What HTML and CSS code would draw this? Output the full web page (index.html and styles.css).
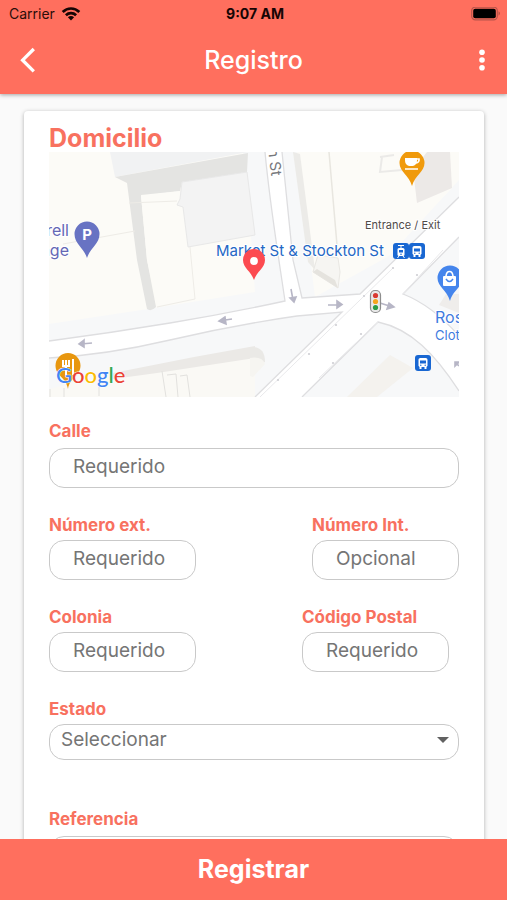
FILE: index.html
```html
<!DOCTYPE html>
<html lang="es">
<head>
<meta charset="utf-8">
<meta name="viewport" content="width=device-width, initial-scale=1">
<title>Registro</title>
<link rel="stylesheet" href="styles.css">
</head>
<body>
<header class="top">
  <div class="status">
    <div class="carrier">
      <span>Carrier</span>
      <svg width="20" height="15" viewBox="0 0 20 15" aria-hidden="true"><g fill="none" stroke="#160504" stroke-width="2.7"><path d="M1.7 5C6.4 0.3 13.6 0.3 18.3 5"/><path d="M4.9 8.3C7.8 5.5 12.2 5.5 15.1 8.3"/></g><path d="M6.9 10.2Q10 7.7 13.1 10.2L10 13.4Z" fill="#160504"/></svg>
    </div>
    <time class="clock">9:07 AM</time>
    <svg class="battery" width="30" height="14" viewBox="0 0 30 14" aria-hidden="true"><rect x="0.7" y="0.2" width="25.6" height="12.6" rx="3.6" fill="none" stroke="#b8554a" stroke-width="1.2"/><rect x="2.2" y="1.7" width="22.6" height="9.6" rx="2" fill="#000"/><path d="M27.7 4.3Q29.6 6.5 27.7 8.700Z" fill="#8f3d34"/></svg>
  </div>
  <div class="bar">
    <button class="icon-btn" type="button" aria-label="Volver"><svg width="16" height="26" viewBox="0 0 16 26" aria-hidden="true"><path d="M13.8 2L2.6 13.2L13.8 24.4" fill="none" stroke="#fff" stroke-width="3.3"/></svg></button>
    <h1 class="title">Registro</h1>
    <button class="icon-btn menu-btn" type="button" aria-label="Menú"><svg width="6" height="22" viewBox="0 0 6 22" aria-hidden="true"><g fill="#fff"><circle cx="3" cy="3.2" r="2.8"/><circle cx="3" cy="11" r="2.8"/><circle cx="3" cy="18.8" r="2.8"/></g></svg></button>
  </div>
</header>

<main class="content">
  <form class="card" id="registro">
    <h2 class="section">Domicilio</h2>
    <svg class="map" viewBox="0 0 410 245" role="img" aria-label="Mapa">
      <rect width="410" height="245" fill="#fcfbf7"/>
      <!-- sidewalks -->
      <path d="M0 172L99 157L206 140L202 85L194 0H248L266 145L340 104L410 28V245H0Z" fill="#f7f8f9"/>
      <path d="M249 2L279 0L288 93L291 125L267 134Z" fill="#fcfbf7"/>
      <path d="M279 0H401L403 36L340 99L290 125Z" fill="#fcfbf7"/>
      <!-- buildings -->
      <path d="M61 0H199L66 25Z" fill="#f1f2f3"/>
      <path d="M66 25L199 1L198 20L133 30L131 39L92 43L98 108L107 155Q102 160 98 157L88 108L78 31Z" fill="#e4e4e2"/>
      <path d="M92 44L132 39L138 95L143 141L108 153L98 108Z" fill="#fcfbf7"/>
      <path d="M133 30L198 20L206 83L139 95L134 55L128 53L131 47Z" fill="#f3f3f3" stroke="#e8e8e8"/>
      <path d="M14 92L86 79M80 51L128 49M141 95L146 147L108 155" fill="none" stroke="#eeece7"/>
      <path d="M244 0L251 2L266 118L259 110Z" fill="#ecebe8"/>
      <path d="M280 0L288 93" stroke="#e8e6e0" stroke-width="1.5"/>
      <path d="M333 5L331 20L353 18M331 5L345 3" fill="none" stroke="#ebeae8" stroke-width="2"/>
      <path d="M364 18L378 0H401L403 36L368 51Z" fill="#ece9e7"/>
      <path d="M264 120L269 103L289 106L291 120L289 136Z" fill="#f6f5f2" stroke="#e9e7e3"/>
      <path d="M264 120L289 136L286 128L268 117Z" fill="#e5e3de"/>
      <path d="M390 153L397 142H410V161Z" fill="#efedeb"/>
      <path d="M341 203L364 216L328 245H298Z" fill="#f4f2ee"/>
      <path d="M36 228L108 219L206 203L206 245H0V237Z" fill="#faf9f5"/>
      <path d="M64 221L145 205L206 194V206L108 221L64 227Z" fill="#ebe9e6"/>
      <path d="M201 195Q216 194 216 210L201 216Z" fill="#eae9e6"/><path d="M201 206Q213 204 216 212L204 225L201 224Z" fill="#f6f5f1"/>
      <path d="M113 219L117 245M118 223L127 222L129 245M131 224L138 223L141 245M15 236V245M50 235V244M1 237V245" fill="none" stroke="#e2e1de"/>
      <!-- roads -->
      <path d="M0 189Q61 181 121 171T236 149C229 101 221 54 216 0H233L244 108L253 146L311 142L410 45V85L354 142C377 151 396 168 410 184V239C386 202 362 177 329 170L253 245H206L293 160L248 164Q185 173 121 188T0 206Z" fill="#fff"/>
      <g fill="none" stroke="#dedee0" stroke-width="1.3">
        <path d="M0 189Q61 181 121 171T236 149C229 101 221 54 216 0"/>
        <path d="M233 0L244 108L253 146L311 142L410 45"/>
        <path d="M410 85L354 142C377 151 396 168 410 184"/>
        <path d="M410 239C386 202 362 177 329 170L253 245"/>
        <path d="M206 245L293 160L248 164Q185 173 121 188T0 206"/>
        <path d="M344 116L211 245M394 98L354 142M329 170L270 226" stroke="#e9e9eb" stroke-width="1"/>
      </g>
      <g fill="#cfcfd4"><circle cx="344" cy="116" r="1.1"/><circle cx="315" cy="144" r="1.1"/><circle cx="287" cy="173" r="1.1"/><circle cx="260" cy="202" r="1.1"/><circle cx="229" cy="228" r="1.1"/><circle cx="368" cy="123" r="1.1"/><circle cx="312" cy="182" r="1.1"/><circle cx="284" cy="211" r="1.1"/></g>
      <!-- traffic directions -->
      <g fill="#b7b6c6" stroke="#b7b6c6" stroke-width="1.6">
        <path d="M43 191L32 192M35 188L30 192L35 195Z"/>
        <path d="M183 167L173 168.500M176 165L170 169L177 172Z"/>
        <path d="M242 137L244 148M241 146L245 150L247 145Z"/>
        <path d="M279 153H290M288 149L293 152.500L288 156Z"/>
        <path d="M331 151L342 154.500M340 151L345 155L338 157Z"/>
        <path d="M410 214L406 210M406 214V210H410Z"/>
      </g>
      <rect x="321.500" y="138.500" width="10" height="22" rx="4.500" fill="#e9e9e9" stroke="#8d8d8d" stroke-width="1.200"/>
      <circle cx="326.500" cy="143.500" r="2.600" fill="#d93a32"/><circle cx="326.500" cy="149.500" r="2.600" fill="#f5a51d"/><circle cx="326.500" cy="155.500" r="2.600" fill="#2c9c46"/>
      <!-- places -->
      <path d="M38 106C35 96 25.500 92 25.500 82A12.500 12.500 0 0 1 50.500 82C50.500 92 41 96 38 106Z" fill="#6873c3"/>
      <text x="38" y="88" class="m-park">P</text>
      <path d="M363 34C360 23 350.500 20 350.500 11A12.500 12.500 0 0 1 375.500 11C375.500 20 366 23 363 34Z" fill="#f09a0c"/>
      <path d="M356 6H368V8C368 12 366 14 362 14C358 14 356 12 356 8Z" fill="#fff"/><path d="M368 7H370Q370.500 11 366 11M356 17H369" fill="none" stroke="#fff" stroke-width="1.700"/>
      <path d="M401 149C398 138 388.500 135 388.500 126A12.500 12.500 0 0 1 413.500 126C413.500 135 404 138 401 149Z" fill="#4585ec"/>
      <rect x="394" y="124" width="13" height="10" rx="1" fill="#fff"/><path d="M397 124Q397.500 119.500 400.500 119.500T404 124" fill="none" stroke="#fff" stroke-width="1.600"/><path d="M397 127Q400.500 132 404 127" fill="none" stroke="#4585ec" stroke-width="1.500"/>
      <path d="M19 237C17 225 6.500 224 6.500 213.500A12.500 12.500 0 0 1 31.500 213.500C31.500 224 21 225 19 237Z" fill="#e8970f"/>
      <path d="M14 208V215M17 208V215M20 208V215M14 214H20M17 214V223M24 207V223" fill="none" stroke="#fff" stroke-width="2"/>
      <g fill="#1967d2"><rect x="344" y="91" width="16" height="16" rx="3"/><rect x="360" y="91" width="16" height="16" rx="3"/><rect x="366" y="203" width="16" height="16" rx="3"/></g>
      <path d="M349 93.500H355M352 93.500V96" stroke="#fff"/><rect x="348.500" y="96" width="7" height="8" rx="1.500" fill="#fff"/><rect x="350" y="98" width="4" height="2.500" fill="#1967d2"/><path d="M350 104L348.500 106M354 104L355.500 106" stroke="#fff"/><circle cx="352" cy="102.300" r="0.800" fill="#1967d2"/>
      <g id="bus"><rect x="363.500" y="94" width="9" height="9" rx="1.800" fill="#fff"/><path d="M364.500 102H366.500V105H364.500ZM369.500 102H371.500V105H369.500Z" fill="#fff"/><rect x="365" y="96.500" width="6" height="3" fill="#1967d2"/><circle cx="365.800" cy="101.300" r="0.700" fill="#1967d2"/><circle cx="370.200" cy="101.300" r="0.700" fill="#1967d2"/></g>
      <use href="#bus" x="6" y="112"/>
      <g class="m-label">
        <text x="20" y="84" class="m-violet" text-anchor="end">rell</text>
        <text x="20" y="104" class="m-violet" text-anchor="end">age</text>
        <text x="167" y="104" class="m-station">Market St &amp; Stockton St</text>
        <text x="316" y="77" class="m-entry">Entrance / Exit</text>
        <text x="386" y="171" class="m-shop">Ros</text>
        <text x="386" y="188" class="m-kind">Clot</text>
        <text transform="translate(219 -3) rotate(83)" class="m-street">n St</text>
      </g>
      <path d="M205 128C202 119 194 116 194 108A11 11 0 0 1 216 108C216 116 208 119 205 128Z" fill="#fc4a50"/><circle cx="205" cy="109" r="3.900" fill="#fff"/>
      <text x="7" y="231" class="m-logo"><tspan fill="#4285f4">G</tspan><tspan fill="#ea4335">o</tspan><tspan fill="#fbbc05">o</tspan><tspan fill="#4285f4">g</tspan><tspan fill="#34a853">l</tspan><tspan fill="#ea4335">e</tspan></text>
    </svg>

    <div class="field roomy first">
      <label for="calle">Calle</label>
      <input id="calle" type="text" placeholder="Requerido">
    </div>
    <div class="pair">
      <div class="field short">
        <label for="ext">Número ext.</label>
        <input id="ext" type="text" placeholder="Requerido">
      </div>
      <div class="field short">
        <label for="int">Número Int.</label>
        <input id="int" type="text" placeholder="Opcional">
      </div>
    </div>
    <div class="pair inset">
      <div class="field short">
        <label for="colonia">Colonia</label>
        <input id="colonia" type="text" placeholder="Requerido">
      </div>
      <div class="field short">
        <label for="cp">Código Postal</label>
        <input id="cp" type="text" placeholder="Requerido">
      </div>
    </div>
    <div class="field">
      <label for="estado">Estado</label>
      <div class="select">
        <select id="estado"><option>Seleccionar</option></select>
        <svg width="12" height="6" viewBox="0 0 12 6" aria-hidden="true"><path d="M0 0H12L6 6Z" fill="#616161"/></svg>
      </div>
    </div>
    <div class="field roomy last">
      <label for="referencia">Referencia</label>
      <textarea id="referencia" rows="3"></textarea>
    </div>
  </form>
</main>

<button class="submit" type="submit" form="registro">Registrar</button>
</body>
</html>
```

FILE: styles.css
```css
:root {
  --coral: #ff6f5e;
  --label: #f8715f;
  --line: #c9c9c9;
}

* { box-sizing: border-box; }

body {
  margin: 0;
  height: 100vh;
  display: flex;
  flex-direction: column;
  background: #fafafa;
  font-family: Inter, "Liberation Sans", sans-serif;
}

button, input, select, textarea { font-family: inherit; }

.top {
  background: var(--coral);
  box-shadow: 0 1px 4px rgba(0, 0, 0, 0.35);
  position: relative;
}

.status {
  display: grid;
  grid-template-columns: 1fr auto 1fr;
  align-items: center;
  padding: 4px 6px 4px 9px;
  font-size: 14px;
  line-height: 20px;
  color: #2b0d09;
}

.carrier {
  display: flex;
  align-items: center;
  gap: 6px;
}

.clock {
  font-weight: 700;
  color: #160504;
}

.battery { justify-self: end; }

.bar {
  display: grid;
  grid-template-columns: 1fr auto 1fr;
  align-items: center;
  padding: 14px 20px 16px;
}

.icon-btn {
  display: flex;
  justify-self: start;
  padding: 0;
  border: 0;
  background: none;
}

.menu-btn {
  justify-self: end;
  padding-right: 2px;
}

.title {
  margin: 0;
  font-size: 25px;
  line-height: 36px;
  font-weight: 500;
  color: #fff;
}

.content {
  flex: 1;
  min-height: 0;
  overflow: auto;
  scrollbar-width: none;
  padding: 17px 23px 0 24px;
}

.card {
  padding: 13px 25px 24px;
  background: #fff;
  border-radius: 4px;
  box-shadow: 0 1px 4px rgba(0, 0, 0, 0.3);
}

.section {
  margin: 0;
  font-size: 25px;
  line-height: 28px;
  font-weight: 700;
  color: var(--label);
}

.map {
  display: block;
  width: 100%;
  overflow: hidden;
}

.m-label { font-size: 15px; stroke: #fff; stroke-width: 2px; paint-order: stroke; }
.m-violet { fill: #6467b5; font-size: 16px; }
.m-station { fill: #2467c5; }
.m-entry { fill: #4f4a49; font-size: 11px; }
.m-shop { fill: #3f7be0; font-size: 16px; }
.m-kind { fill: #3f7be0; font-size: 13px; }
.m-street { fill: #77787c; }
.m-park { fill: #fff; font-size: 15px; font-weight: 700; text-anchor: middle; }
.m-logo { font-family: Lato, sans-serif; font-size: 22px; font-weight: 500; stroke: #fff; stroke-width: 1px; paint-order: stroke; }

.field {
  display: flex;
  flex-direction: column;
  gap: 5px;
  margin-top: 27px;
}

.roomy { gap: 7px; }
.first { margin-top: 24px; }
.last { margin-top: 49px; }

.pair {
  display: flex;
  justify-content: space-between;
}

.inset { padding-right: 10px; }
.short { width: 147px; }

label {
  font-size: 17px;
  line-height: 20px;
  font-weight: 700;
  color: var(--label);
}

input, select, textarea {
  width: 100%;
  margin: 0;
  border: 1px solid var(--line);
  border-radius: 15px;
  background: #fff;
  font-size: 19px;
  line-height: 24px;
  color: #757575;
}

input { padding: 6px 23px 8px; }
input::placeholder { color: #757575; opacity: 1; }

.select {
  display: grid;
  align-items: center;
}

.select > * { grid-area: 1 / 1; }

select {
  appearance: none;
  padding: 3px 32px 7px 11px;
}

.select svg {
  justify-self: end;
  margin: 0 10px 4px 0;
  pointer-events: none;
}

textarea {
  display: block;
  resize: none;
  padding: 8px 24px;
}

.submit {
  position: relative;
  padding: 12px 0 13px;
  border: 0;
  background: var(--coral);
  font-size: 25px;
  line-height: 36px;
  font-weight: 700;
  color: #fff;
}
```
